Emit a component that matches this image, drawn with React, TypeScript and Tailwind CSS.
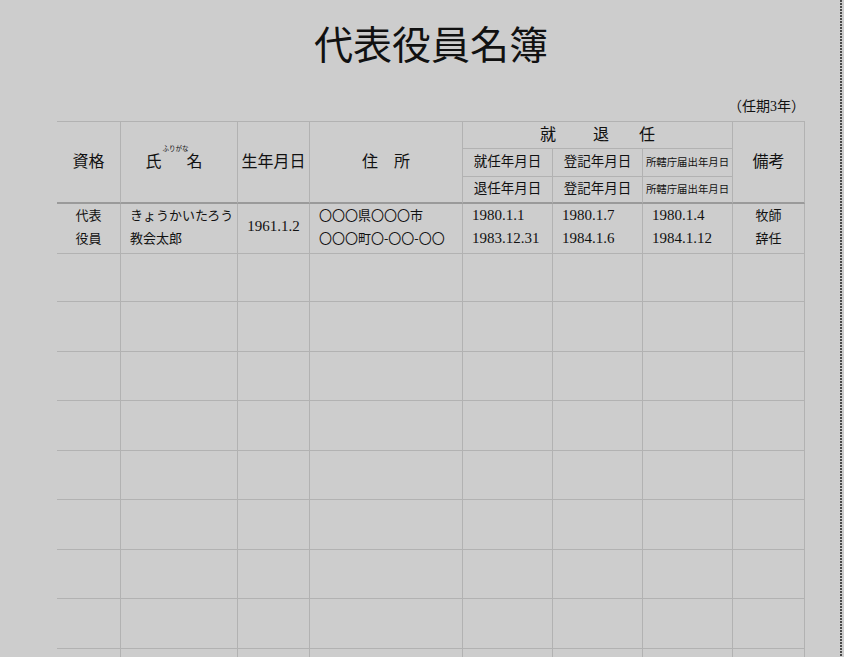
import React from 'react'

const cols = 'grid grid-cols-[64px_117px_72px_153px_90px_90px_90px_72px]'
const font = "font-['Liberation_Serif','Noto_Sans_CJK_JP',serif]"

function HeaderCell({
  className = '',
  children,
}: {
  className?: string
  children?: React.ReactNode
}) {
  return (
    <div className={`flex items-center justify-center border-r border-b border-[#b2b2b2] ${className}`}>
      {children}
    </div>
  )
}

const emptyRows = [49, 50, 49, 50, 49, 50, 49, 50, 49]

export default function App() {
  const bottom = 'row-span-3 border-b-2 border-b-[#9a9a9a]'

  return (
    <div className={`flex h-[657px] overflow-hidden bg-[#cdcdcd] text-[#111] ${font}`}>
      <div className="w-[840px] shrink-0">
        <div className="ml-[57px] w-[748px] pt-[23px]">
          {/* Title */}
          <h1 className="h-[39px] text-center text-[39px] leading-[39px] font-['Noto_Sans_CJK_JP',sans-serif]">
            代表役員名簿
          </h1>
          <div className="mt-[37px] h-[16px] text-right text-[14px] leading-[16px]">（任期3年）</div>

          {/* Header */}
          <div className={`${cols} mt-[6px] grid-rows-[27px_28px_27px] border-t border-[#b2b2b2]`}>
            <HeaderCell className={`${bottom} text-[16px]`}>資格</HeaderCell>
            <HeaderCell className={`${bottom} pr-[10px] text-[16px]`}>
              <span className="relative flex leading-[16px]">
                <span>氏</span>
                <span className="ml-[25px]">名</span>
                <span className="absolute left-[17px] top-[-8px] text-[6.5px] leading-none whitespace-nowrap">
                  ふりがな
                </span>
              </span>
            </HeaderCell>
            <HeaderCell className={`${bottom} text-[16px]`}>生年月日</HeaderCell>
            <HeaderCell className={`${bottom} text-[16px]`}>
              住<span className="ml-[16px]">所</span>
            </HeaderCell>
            <HeaderCell className="col-span-3 text-[16px]">
              <span>就</span>
              <span className="ml-[37px]">退</span>
              <span className="ml-[30px]">任</span>
            </HeaderCell>
            <HeaderCell className={`${bottom} text-[16px]`}>備考</HeaderCell>
            <HeaderCell className="text-[13.5px]">就任年月日</HeaderCell>
            <HeaderCell className="text-[13.5px]">登記年月日</HeaderCell>
            <HeaderCell className="text-[10.4px]">所轄庁届出年月日</HeaderCell>
            <HeaderCell className="border-b-2 border-b-[#9a9a9a] text-[13.5px]">退任年月日</HeaderCell>
            <HeaderCell className="border-b-2 border-b-[#9a9a9a] text-[13.5px]">登記年月日</HeaderCell>
            <HeaderCell className="border-b-2 border-b-[#9a9a9a] text-[10.4px]">所轄庁届出年月日</HeaderCell>
          </div>

          {/* Data row */}
          <div className={`${cols} h-[49px] leading-[23px]`}>
            <div className="flex flex-col items-center justify-center border-r border-b border-[#b2b2b2] pb-[3px] text-[13px]">
              <span>代表</span>
              <span>役員</span>
            </div>
            <div className="flex flex-col justify-center border-r border-b border-[#b2b2b2] pb-[3px] pl-[9px] text-[13px]">
              <span>きょうかいたろう</span>
              <span>教会太郎</span>
            </div>
            <div className="flex items-center justify-center border-r border-b border-[#b2b2b2] pb-[4px] text-[15px]">
              1961.1.2
            </div>
            <div className="flex flex-col justify-center border-r border-b border-[#b2b2b2] pb-[3px] pl-[9px] text-[13px]">
              <span>〇〇〇県〇〇〇市</span>
              <span>〇〇〇町〇-〇〇-〇〇</span>
            </div>
            {[
              ['1980.1.1', '1983.12.31'],
              ['1980.1.7', '1984.1.6'],
              ['1980.1.4', '1984.1.12'],
            ].map(([a, b]) => (
              <div
                key={a}
                className="flex flex-col justify-center border-r border-b border-[#b2b2b2] pb-[3px] pl-[9px] text-[15px]"
              >
                <span>{a}</span>
                <span>{b}</span>
              </div>
            ))}
            <div className="flex flex-col items-center justify-center border-r border-b border-[#b2b2b2] pb-[3px] text-[13px]">
              <span>牧師</span>
              <span>辞任</span>
            </div>
          </div>

          {/* Empty rows */}
          {emptyRows.map((h, i) => (
            <div key={i} className={`${cols} ${h === 49 ? 'h-[49px]' : 'h-[50px]'}`}>
              {Array.from({ length: 8 }).map((_, j) => (
                <div key={j} className="border-r border-b border-[#b2b2b2]" />
              ))}
            </div>
          ))}
        </div>
      </div>

      {/* Page edge */}
      <div className="w-[2px] shrink-0 bg-[repeating-linear-gradient(to_bottom,#4a4a4a_0_2px,transparent_2px_3px)]" />
      <div className="flex-1" />
    </div>
  )
}
